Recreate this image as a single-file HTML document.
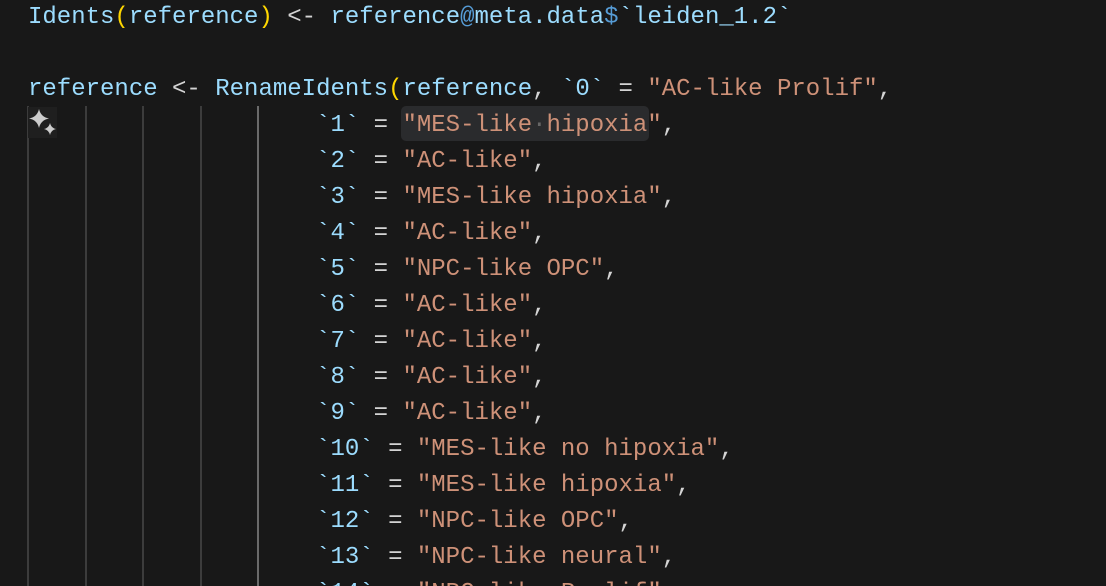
<!DOCTYPE html>
<html><head><meta charset="utf-8"><style>
html,body{margin:0;padding:0;background:#181818;width:1106px;height:586px;overflow:hidden;position:relative}
.code{position:absolute;left:28px;top:0px;font-family:"Liberation Mono","DejaVu Sans Mono",monospace;font-size:24px;line-height:36px;color:#9CDCFE;white-space:pre}
.o{color:#D4D4D4}.p{color:#FFD700}.s{color:#CE9178}.k{color:#569CD6}
.g{position:absolute;top:106px;bottom:0;width:2px;background:#3c3c3c}
.hl{position:absolute;left:401px;top:106px;width:248px;height:35px;background:#2a2b2d;border-radius:5px}
.dot{color:#666}
</style></head><body>
<div class="hl"></div>
<div class="g" style="left:27px"></div>
<div class="g" style="left:85px"></div>
<div class="g" style="left:142px"></div>
<div class="g" style="left:200px"></div>
<div class="g" style="left:257px;background:#6a6a6a"></div>
<div style="position:absolute;left:28px;top:107px;width:29px;height:31px;background:#1f1f1f"></div>
<svg style="position:absolute;left:28px;top:108px" width="30" height="30" viewBox="0 0 30 30"><path d="M11 1 Q12.8 9 21 10.5 Q12.8 12 11 20 Q9.2 12 1 10.5 Q9.2 9 11 1Z" fill="#ccc"/><path d="M22 15 Q23.2 20 28 21 Q23.2 22 22 27 Q20.8 22 16 21 Q20.8 20 22 15Z" fill="#ccc"/></svg>
<div class="code">Idents<span class="p">(</span>reference<span class="p">)</span> <span class="o">&lt;-</span> reference<span class="k">@</span>meta.data<span class="k">$</span>`leiden_1.2`

reference <span class="o">&lt;-</span> RenameIdents<span class="p">(</span>reference<span class="o">,</span> `0` <span class="o">=</span> <span class="s">"AC-like Prolif"</span><span class="o">,</span>
                    `1` <span class="o">=</span> <span class="s">"MES-like<span class="dot">·</span>hipoxia"</span><span class="o">,</span>
                    `2` <span class="o">=</span> <span class="s">"AC-like"</span><span class="o">,</span>
                    `3` <span class="o">=</span> <span class="s">"MES-like hipoxia"</span><span class="o">,</span>
                    `4` <span class="o">=</span> <span class="s">"AC-like"</span><span class="o">,</span>
                    `5` <span class="o">=</span> <span class="s">"NPC-like OPC"</span><span class="o">,</span>
                    `6` <span class="o">=</span> <span class="s">"AC-like"</span><span class="o">,</span>
                    `7` <span class="o">=</span> <span class="s">"AC-like"</span><span class="o">,</span>
                    `8` <span class="o">=</span> <span class="s">"AC-like"</span><span class="o">,</span>
                    `9` <span class="o">=</span> <span class="s">"AC-like"</span><span class="o">,</span>
                    `10` <span class="o">=</span> <span class="s">"MES-like no hipoxia"</span><span class="o">,</span>
                    `11` <span class="o">=</span> <span class="s">"MES-like hipoxia"</span><span class="o">,</span>
                    `12` <span class="o">=</span> <span class="s">"NPC-like OPC"</span><span class="o">,</span>
                    `13` <span class="o">=</span> <span class="s">"NPC-like neural"</span><span class="o">,</span>
                    `14` <span class="o">=</span> <span class="s">"NPC-like Prolif"</span><span class="o">,</span></div>
</body></html>
